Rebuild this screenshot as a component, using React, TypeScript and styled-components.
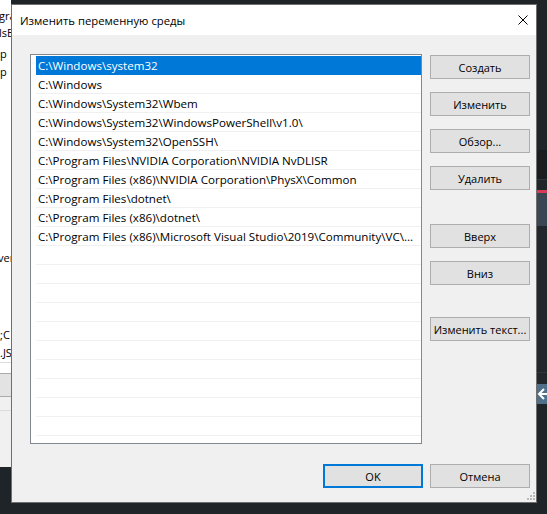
import React from "react";
import styled, { createGlobalStyle } from "styled-components";

const FONT = `"Open Sans", "Noto Sans", "DejaVu Sans", sans-serif`;

const GlobalStyle = createGlobalStyle`
  html, body { margin: 0; padding: 0; background: #1f2428; }
  body { font-family: ${FONT}; }
  #root { width: 547px; height: 514px; overflow: hidden; }
`;

const Desktop = styled.div`
  width: 547px;
  height: 514px;
  display: flex;
  align-items: flex-start;
  background: #1f2428;
  overflow: hidden;
`;

/* ---------- window behind, on the left ---------- */
const BackWindow = styled.div`
  width: 11px;
  height: 467px;
  flex: none;
  background: #fff;
  display: flex;
  flex-direction: column;
  overflow: hidden;
  font: 11px/14px ${FONT};
  color: #000;
`;

const Frag = styled.div<{ $mt: number; $indent: number }>`
  margin-top: ${(p) => p.$mt}px;
  height: 14px;
  white-space: nowrap;
  overflow: hidden;
  text-indent: ${(p) => -p.$indent}px;
`;

const BackRule = styled.div<{ $mt: number }>`
  margin-top: ${(p) => p.$mt}px;
  height: 1px;
  background: #dcdcdc;
  flex: none;
`;

const BackBar = styled.div`
  margin-top: 10px;
  height: 22px;
  flex: none;
  background: #e3e3e3;
  border-top: 1px solid #ababab;
  border-bottom: 1px solid #ababab;
`;

const BackPanel = styled.div`
  flex: 1;
  background: #f0f0f0;
  padding-top: 13px;
`;

/* ---------- dialog ---------- */
const Dialog = styled.div`
  position: relative;
  flex: none;
  width: 526px;
  height: 499px;
  margin-top: 4px;
  box-sizing: border-box;
  border: 1px solid #6f6f6f;
  display: flex;
  flex-direction: column;
  background: #f0f0f0;
  font: 11px ${FONT};
  color: #000;
`;

const TitleBar = styled.div`
  height: 30px;
  flex: none;
  background: #fff;
  display: flex;
  align-items: center;
  justify-content: space-between;
  padding: 0 8px;
`;

const Title = styled.span`
  font-size: 11.3px;
  color: #000;
`;

const Body = styled.div`
  flex: 1;
  display: flex;
  flex-direction: column;
  padding: 19px 6px 0 18px;
`;

const MainRow = styled.div`
  display: flex;
  align-items: flex-start;
  gap: 8px;
`;

const ListBox = styled.div`
  width: 392px;
  height: 390px;
  box-sizing: border-box;
  border: 1px solid #828790;
  background: #fff;
  padding: 1px 0 0 5px;
  overflow: hidden;
  flex: none;
`;

const Row = styled.div<{ $selected?: boolean }>`
  height: 19px;
  box-sizing: border-box;
  border-bottom: 1px solid ${(p) => (p.$selected ? "#0078d7" : "#f0f0f0")};
  background: ${(p) => (p.$selected ? "#0078d7" : "#fff")};
  color: ${(p) => (p.$selected ? "#fff" : "#000")};
  padding-left: 2px;
  font-size: 11.6px;
  line-height: 19px;
  white-space: nowrap;
  overflow: hidden;
`;

const SideColumn = styled.div`
  width: 100px;
  display: flex;
  flex-direction: column;
  padding-top: 1px;
`;

const Button = styled.button<{ $mt?: number; $primary?: boolean }>`
  width: 100px;
  height: 24px;
  margin-top: ${(p) => p.$mt ?? 0}px;
  box-sizing: border-box;
  border: ${(p) => (p.$primary ? "2px solid #0078d7" : "1px solid #adadad")};
  background: #e1e1e1;
  color: #000;
  font: 11px ${FONT};
  padding: 0;
  display: flex;
  align-items: center;
  justify-content: center;
  white-space: nowrap;
  flex: none;
`;

const Footer = styled.div`
  display: flex;
  justify-content: flex-end;
  gap: 7px;
  margin-top: 20px;
`;

const Grip = styled.svg`
  position: absolute;
  right: 1px;
  bottom: 2px;
`;

/* ---------- right strip (editor behind) ---------- */
const RightStrip = styled.div`
  flex: 1;
  height: 514px;
  display: flex;
  flex-direction: column;
  overflow: hidden;
`;

const Segment = styled.div<{ $h: number; $c: string }>`
  height: ${(p) => p.$h}px;
  flex: none;
  background: ${(p) => p.$c};
  display: flex;
  align-items: center;
`;

const items = [
  "C:\\Windows\\system32",
  "C:\\Windows",
  "C:\\Windows\\System32\\Wbem",
  "C:\\Windows\\System32\\WindowsPowerShell\\v1.0\\",
  "C:\\Windows\\System32\\OpenSSH\\",
  "C:\\Program Files\\NVIDIA Corporation\\NVIDIA NvDLISR",
  "C:\\Program Files (x86)\\NVIDIA Corporation\\PhysX\\Common",
  "C:\\Program Files\\dotnet\\",
  "C:\\Program Files (x86)\\dotnet\\",
  "C:\\Program Files (x86)\\Microsoft Visual Studio\\2019\\Community\\VC\\...",
];

const frags = [
  { t: "gra", mt: 9, i: 1 },
  { t: "lsE", mt: 3, i: 1 },
  { t: "p", mt: 7, i: 0 },
  { t: "p", mt: 4, i: 0 },
  { t: "ver", mt: 172, i: 2 },
  { t: ";C", mt: 63, i: 0 },
  { t: ".JS", mt: 4, i: 0 },
];

const sideButtons = [
  { t: "Создать", mt: 0 },
  { t: "Изменить", mt: 13 },
  { t: "Обзор...", mt: 13 },
  { t: "Удалить", mt: 13 },
  { t: "Вверх", mt: 34 },
  { t: "Вниз", mt: 13 },
  { t: "Изменить текст...", mt: 32 },
];

const segments = [
  { h: 150, c: "#1f2428" },
  { h: 29, c: "#1a1d20" },
  { h: 1, c: "#2e3439" },
  { h: 10, c: "#20252a" },
  { h: 3, c: "#d93a56" },
  { h: 33, c: "#3a4652" },
  { h: 146, c: "#22272b" },
  { h: 1, c: "#30363c" },
  { h: 11, c: "#22272b" },
];

export default function App() {
  const emptyRows = 21 - items.length;
  return (
    <>
      <GlobalStyle />
      <Desktop>
        <BackWindow>
          {frags.map((f, k) => (
            <Frag key={k} $mt={f.mt} $indent={f.i}>
              {f.t}
            </Frag>
          ))}
          <BackRule $mt={2} />
          <BackBar />
          <BackPanel>
            <BackRule $mt={0} />
          </BackPanel>
        </BackWindow>

        <Dialog>
          <TitleBar>
            <Title>Изменить переменную среды</Title>
            <svg width="10" height="10" viewBox="0 0 10 10">
              <path d="M0.5 0.5 L9.5 9.5 M9.5 0.5 L0.5 9.5" stroke="#000" strokeWidth="1" fill="none" />
            </svg>
          </TitleBar>
          <Body>
            <MainRow>
              <ListBox>
                {items.map((t, k) => (
                  <Row key={k} $selected={k === 0}>
                    {t}
                  </Row>
                ))}
                {Array.from({ length: emptyRows }).map((_, k) => (
                  <Row key={"e" + k} />
                ))}
              </ListBox>
              <SideColumn>
                {sideButtons.map((b) => (
                  <Button key={b.t} $mt={b.mt}>
                    {b.t}
                  </Button>
                ))}
              </SideColumn>
            </MainRow>
            <Footer>
              <Button $primary>OK</Button>
              <Button>Отмена</Button>
            </Footer>
          </Body>
          <Grip width="8" height="8" viewBox="0 0 8 8">
            <g fill="#b9b9b9">
              <rect x="6" y="0" width="2" height="2" />
              <rect x="3" y="3" width="2" height="2" />
              <rect x="6" y="3" width="2" height="2" />
              <rect x="0" y="6" width="2" height="2" />
              <rect x="3" y="6" width="2" height="2" />
              <rect x="6" y="6" width="2" height="2" />
            </g>
          </Grip>
        </Dialog>

        <RightStrip>
          {segments.map((s, k) => (
            <Segment key={k} $h={s.h} $c={s.c} />
          ))}
          <Segment $h={20} $c="#4f6f8a">
            <svg width="10" height="20" viewBox="0 0 10 20">
              <path d="M7 5 L2 10 L7 15 M2 10 L10 10" stroke="#fff" strokeWidth="2" fill="none" />
            </svg>
          </Segment>
          <Segment $h={120} $c="#1f2428" />
        </RightStrip>
      </Desktop>
    </>
  );
}
